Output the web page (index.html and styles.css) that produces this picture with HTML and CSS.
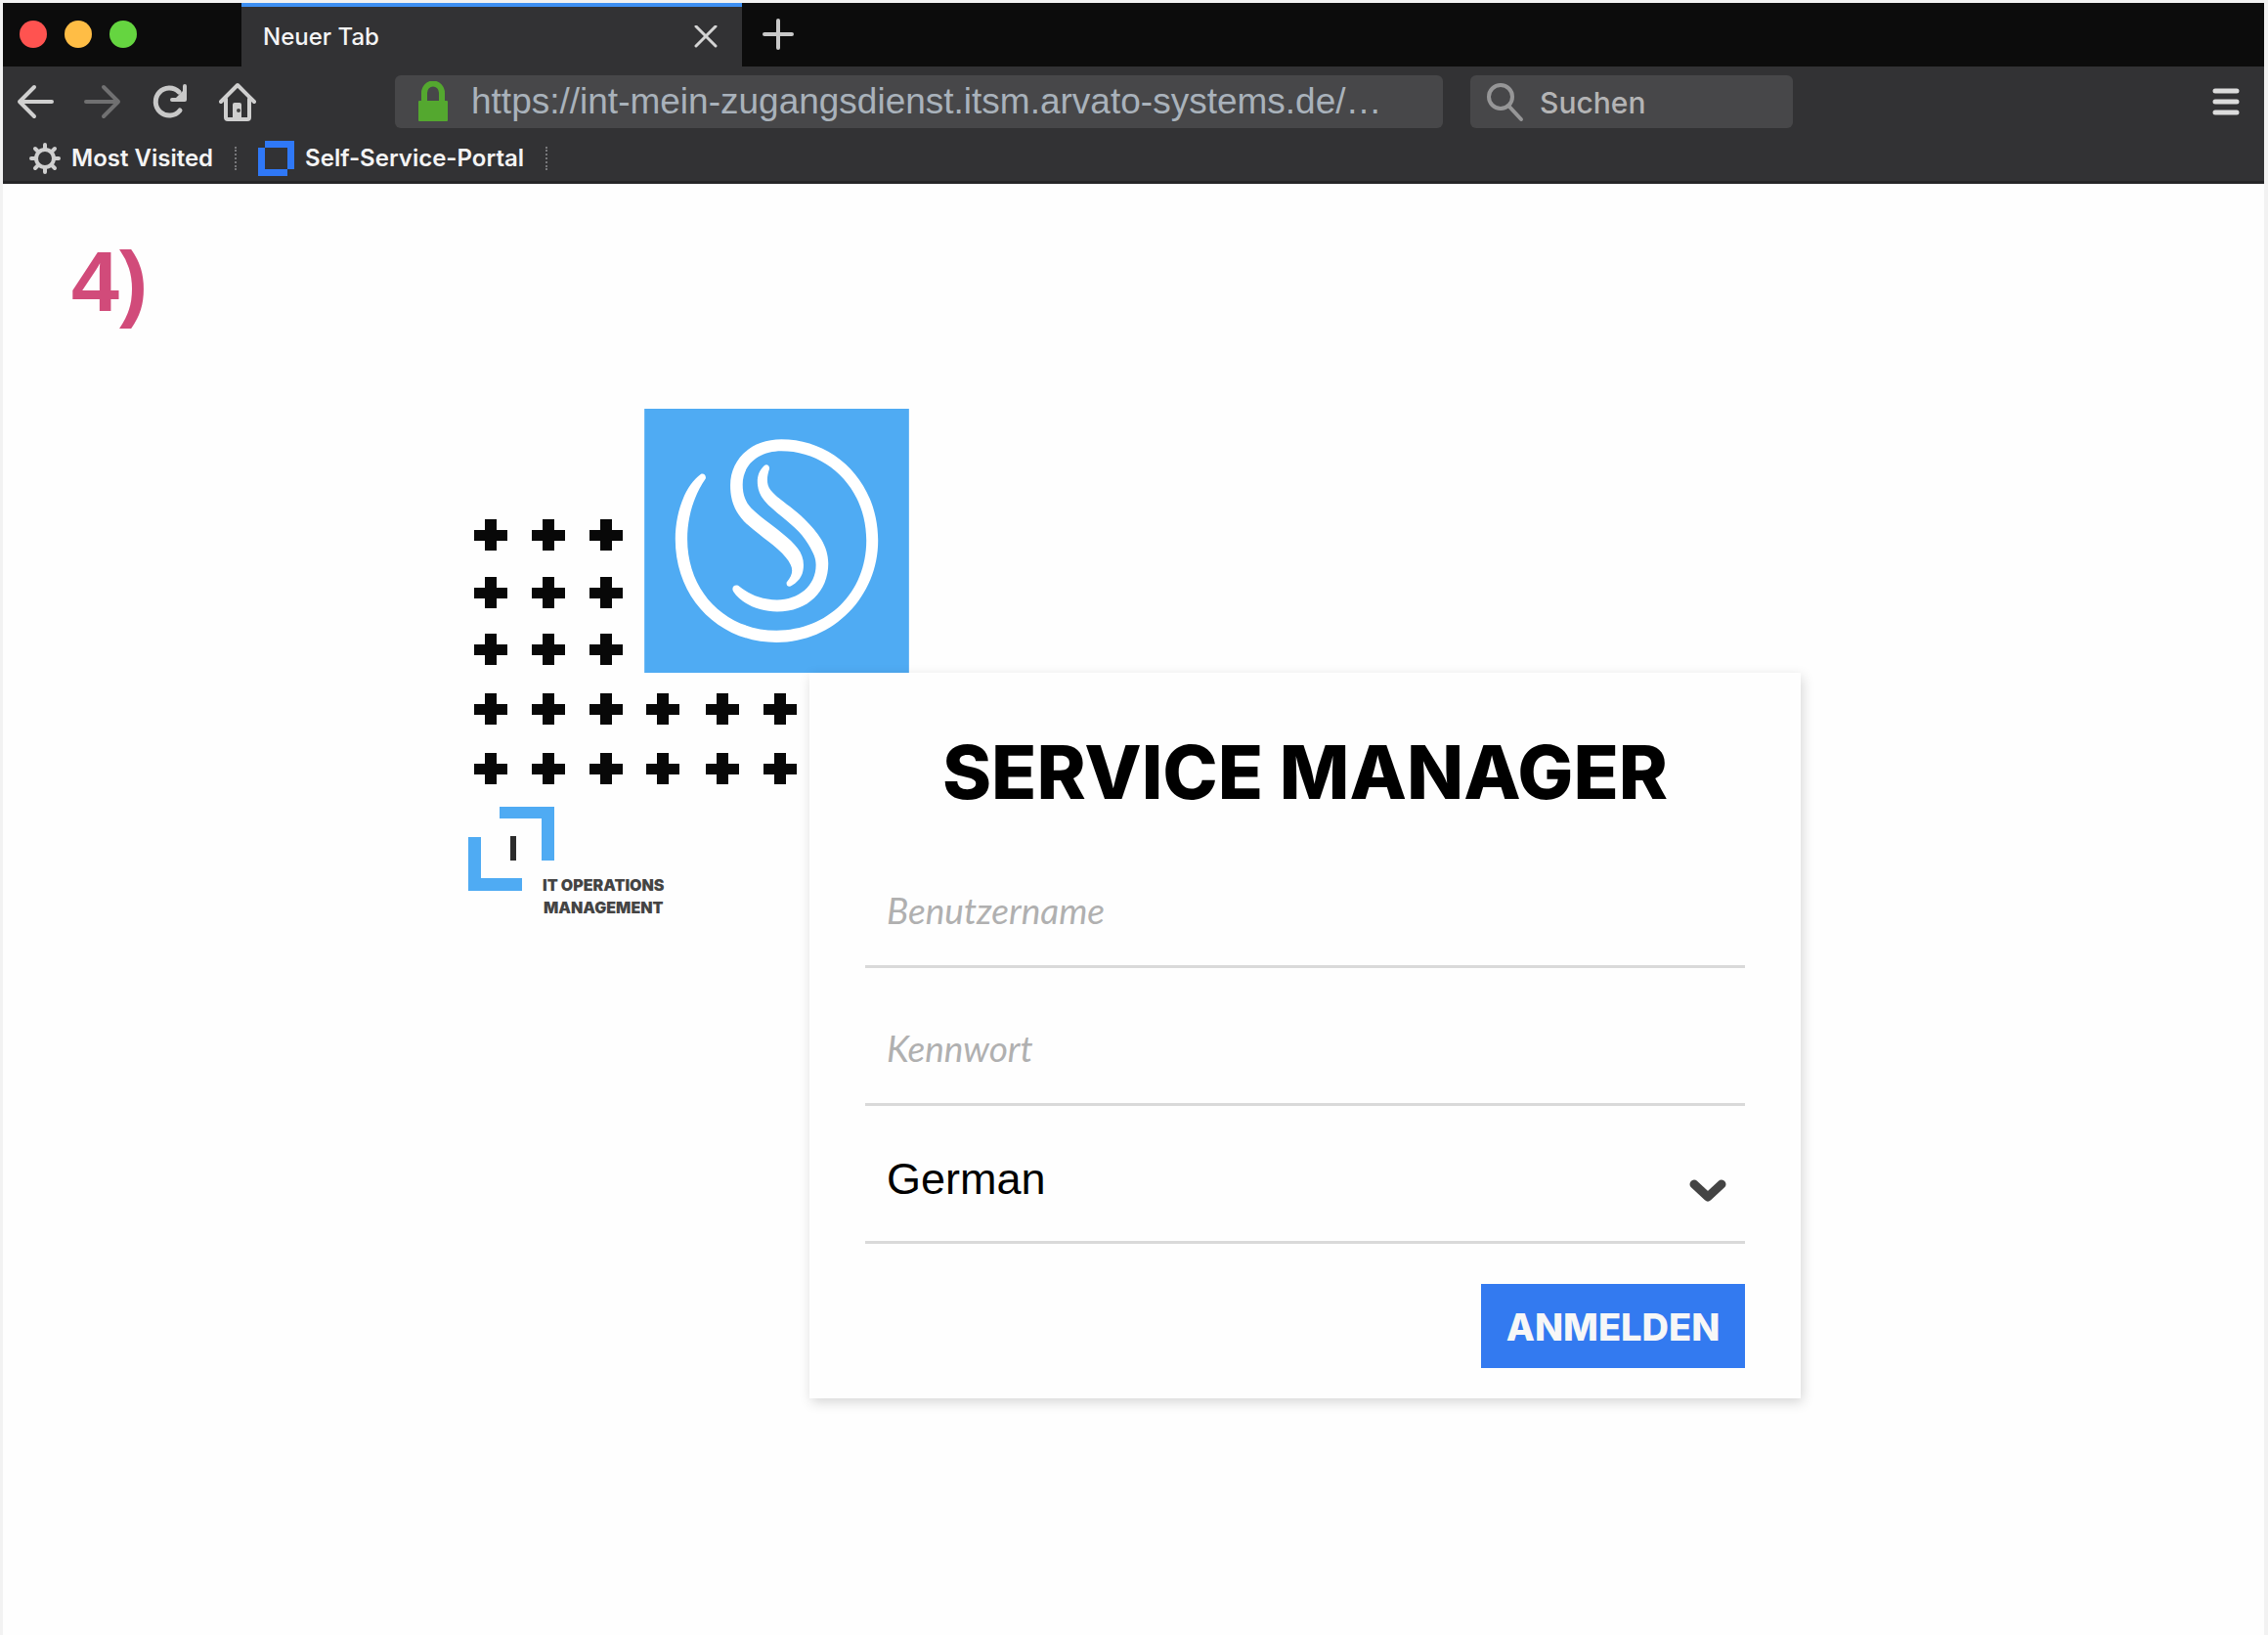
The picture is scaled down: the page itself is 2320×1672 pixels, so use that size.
FILE: index.html
```html
<!DOCTYPE html>
<html lang="de">
<head>
  <meta charset="utf-8">
  <meta name="viewport" content="width=device-width, initial-scale=1">
  <title>Service Manager</title>
  <link rel="stylesheet" href="styles.css">
</head>
<body>
<div class="window">
  <header class="chrome">
    <div class="tabstrip">
      <div class="lights">
        <span class="light light-red"></span>
        <span class="light light-yellow"></span>
        <span class="light light-green"></span>
      </div>
      <div class="tab">
        <span class="tab-title">Neuer Tab</span>
        <button class="icon-button" type="button" aria-label="Tab schließen">
          <svg width="24" height="24" viewBox="0 0 24 24"><path d="M2 1 22 21M22 1 2 21" fill="none" stroke="#d4d4d4" stroke-width="3" stroke-linecap="round"/></svg>
        </button>
      </div>
      <button class="icon-button new-tab" type="button" aria-label="Neuer Tab">
        <svg width="34" height="34" viewBox="0 0 34 34"><path d="M17 3V31M3 17H31" fill="none" stroke="#c8c8c8" stroke-width="4" stroke-linecap="round"/></svg>
      </button>
    </div>

    <div class="toolbar">
      <nav class="nav-buttons" aria-label="Navigation">
        <button class="icon-button" type="button" aria-label="Zurück">
          <svg width="38" height="38" viewBox="0 0 38 38"><path d="M18 4 3 19 18 34M3 19H36" fill="none" stroke="#d0d0d0" stroke-width="4" stroke-linecap="round" stroke-linejoin="round"/></svg>
        </button>
        <button class="icon-button" type="button" aria-label="Vor" disabled>
          <svg width="38" height="38" viewBox="0 0 38 38"><path d="M20 4 35 19 20 34M35 19H2" fill="none" stroke="#707071" stroke-width="4" stroke-linecap="round" stroke-linejoin="round"/></svg>
        </button>
        <button class="icon-button" type="button" aria-label="Neu laden">
          <svg width="38" height="38" viewBox="0 0 38 38"><path d="M29 28A14 14 0 1 1 28 9" fill="none" stroke="#c8c8c8" stroke-width="5" stroke-linecap="round"/><path d="M34 3V17H21" fill="none" stroke="#c8c8c8" stroke-width="4" stroke-linecap="round" stroke-linejoin="round"/><path d="M34 6V17H23Z" fill="#c8c8c8"/></svg>
        </button>
        <button class="icon-button" type="button" aria-label="Startseite">
          <svg width="38" height="40" viewBox="0 0 38 40"><path d="M2 20 19 3 36 20M7 17V36Q7 38 9 38H29Q31 38 31 36V17" fill="none" stroke="#cfcfcf" stroke-width="4" stroke-linecap="round" stroke-linejoin="round"/><path d="M14 38V23Q14 21 16 21H21Q23 21 23 23V38Z" fill="#cfcfcf"/><circle cx="20" cy="29" r="2" fill="#444"/></svg>
        </button>
      </nav>
      <label class="box address">
        <svg width="30" height="42" viewBox="0 0 30 42"><path d="M6 22V12A9 9.500 0 0 1 24 12V22" fill="none" stroke="#54a82f" stroke-width="6"/><rect y="20" width="30" height="21" rx="1" fill="#54a82f"/></svg>
        <input class="address-input" type="text" aria-label="Adresse" value="https://int-mein-zugangsdienst.itsm.arvato-systems.de/…">
      </label>
      <label class="box search">
        <svg class="search-icon" width="38" height="42" viewBox="0 0 38 42"><circle cx="14" cy="16" r="12" fill="none" stroke="#969697" stroke-width="4"/><path d="M22 25 35 39" stroke="#969697" stroke-width="4" stroke-linecap="round"/></svg>
        <input class="search-input" type="text" aria-label="Suchen" placeholder="Suchen">
      </label>
      <button class="icon-button menu" type="button" aria-label="Menü">
        <svg width="28" height="30" viewBox="0 0 28 30"><path d="M3 4H25M3 15H25M3 26H25" stroke="#dcdcdc" stroke-width="5" stroke-linecap="round"/></svg>
      </button>
    </div>

    <nav class="bookmarks" aria-label="Lesezeichen">
      <a class="bookmark" href="#">
        <svg width="32" height="32" viewBox="0 0 32 32"><circle cx="16" cy="16" r="9" fill="none" stroke="#cfcfcf" stroke-width="4"/><path d="M16 6V2M16 26V30M6 16H2M26 16H30M9 9 6 6M23 9 26 6M9 23 6 26M23 23 26 26" stroke="#cfcfcf" stroke-width="4" stroke-linecap="round"/></svg>
        Most Visited
      </a>
      <span class="divider"></span>
      <a class="bookmark" href="#">
        <svg width="37" height="36" viewBox="0 0 37 36"><path d="M7 0H37V29H30V36H0V7H7ZM7 7V29H30V7Z" fill="#2f78f7" fill-rule="evenodd"/></svg>
        Self-Service-Portal
      </a>
      <span class="divider"></span>
    </nav>
  </header>

  <main class="content">
    <p class="step">4)</p>

    <section class="login">
      <svg class="dots-top" width="180" height="270" viewBox="0 0 180 270" aria-hidden="true">
        <defs><path id="plus" d="M-6-16H6V-5H17V6H6V16H-6V6H-17V-5H-6Z" fill="#080808"/></defs>
        <use href="#plus" x="23" y="129"/><use href="#plus" x="82" y="129"/><use href="#plus" x="141" y="129"/>
        <use href="#plus" x="23" y="188"/><use href="#plus" x="82" y="188"/><use href="#plus" x="141" y="188"/>
        <use href="#plus" x="23" y="246"/><use href="#plus" x="82" y="246"/><use href="#plus" x="141" y="246"/>
      </svg>

      <svg class="logo" width="271" height="270" viewBox="597 55 813 811" role="img" aria-label="Service Manager">
        <rect x="597" y="55" width="813" height="811" fill="#4fabf3"/>
        <path fill="#fff" d="M770 256C722 290 692 375 692 455C692 640 830 773 1003 773C1180 773 1315 630 1315 460C1315 280 1180 149 1018 149C925 149 861 210 861 290C861 345 880 380 915 412C960 452 1000 475 1032 512C1055 540 1058 560 1034 588C1032 600 1042 604 1050 598C1078 582 1086 560 1086 535C1086 495 1060 470 1020 437C980 405 950 385 925 360C905 338 899 315 899 288C899 225 950 185 1018 185C1160 185 1279 300 1279 460C1279 620 1160 736 1003 736C850 736 729 620 729 455C729 385 750 320 785 270C788 258 778 252 770 256Z"/>
        <path fill="#fff" d="M965 230C945 250 943 270 945 290C950 330 975 348 1005 375C1050 412 1075 430 1100 470C1118 500 1124 515 1124 535C1124 600 1070 642 1005 642C950 642 915 622 885 598C872 594 864 604 870 616C895 655 950 678 1005 678C1100 678 1162 615 1162 530C1162 475 1130 435 1090 395C1050 355 1010 335 985 305C970 285 974 262 981 240C982 228 972 224 965 230Z"/>
      </svg>

      <div class="brand">
        <svg width="349" height="136" viewBox="0 0 349 136" aria-hidden="true">
          <use href="#plus" x="23" y="37"/><use href="#plus" x="82" y="37"/><use href="#plus" x="141" y="37"/><use href="#plus" x="199" y="37"/><use href="#plus" x="260" y="37"/><use href="#plus" x="319" y="37"/>
          <use href="#plus" x="23" y="98"/><use href="#plus" x="82" y="98"/><use href="#plus" x="141" y="98"/><use href="#plus" x="199" y="98"/><use href="#plus" x="260" y="98"/><use href="#plus" x="319" y="98"/>
        </svg>
        <div class="brand-mark">
          <svg width="88" height="88" viewBox="0 0 88 88" aria-hidden="true"><path d="M32 1H88V56H75V13H32ZM0 32H13V74H55V87H0Z" fill="#4fabf3"/><rect x="43" y="31" width="6" height="25" fill="#2c2c2c"/></svg>
          <p class="brand-name">IT OPERATIONS<br>MANAGEMENT</p>
        </div>
      </div>

      <form class="card">
        <h1 class="title">SERVICE MANAGER</h1>
        <div class="field">
          <input class="field-input" type="text" placeholder="Benutzername" aria-label="Benutzername">
        </div>
        <div class="field">
          <input class="field-input" type="password" placeholder="Kennwort" aria-label="Kennwort">
        </div>
        <div class="field">
          <select class="field-select" aria-label="Sprache">
            <option>German</option>
          </select>
          <svg class="chevron" width="38" height="24" viewBox="0 0 38 24" aria-hidden="true"><path d="M5 5 19 18 33 5" fill="none" stroke="#444" stroke-width="9" stroke-linecap="round" stroke-linejoin="round"/></svg>
        </div>
        <button class="submit" type="button">ANMELDEN</button>
      </form>
    </section>
  </main>
</div>
</body>
</html>
```
FILE: styles.css
```css
* {
  box-sizing: border-box;
}

body {
  margin: 0;
  background: #f2f2f2;
  font-family: Inter, "Liberation Sans", sans-serif;
}

.window {
  display: flex;
  flex-direction: column;
  min-height: 100vh;
  border: solid #f2f2f2;
  border-width: 3px 4px 0 3px;
  background: #fefefe;
}

/* Browser chrome */

.chrome {
  border-bottom: 3px solid #252527;
  background: #323234;
  color: #f4f4f4;
}

.icon-button {
  display: flex;
  padding: 0;
  border: 0;
  background: none;
}

.tabstrip {
  display: flex;
  align-items: center;
  height: 65px;
  background: #0c0c0c;
}

.lights {
  display: flex;
  gap: 18px;
  width: 244px;
  padding: 0 0 2px 17px;
}

.light {
  width: 28px;
  height: 28px;
  border-radius: 50%;
}

.light-red {
  background: #ff5350;
}

.light-yellow {
  background: #ffbd45;
}

.light-green {
  background: #65d540;
}

.tab {
  display: flex;
  align-items: center;
  justify-content: space-between;
  width: 512px;
  height: 65px;
  padding: 0 25px 0 22px;
  border-top: 4px solid #3d8ff2;
  background: #323234;
}

.tab-title {
  font-size: 24px;
  font-weight: 500;
}

.new-tab {
  margin-left: 20px;
  padding-bottom: 2px;
}

.toolbar {
  display: flex;
  align-items: center;
  height: 72px;
  padding: 0 25px 0 14px;
}

.nav-buttons {
  display: flex;
  align-items: center;
  gap: 31px;
  width: 387px;
}

.box {
  display: flex;
  align-items: center;
  min-width: 0;
  height: 54px;
  border-radius: 6px;
  background: #474749;
}

.address {
  flex: 0 1 1072px;
  gap: 24px;
  padding: 0 24px;
}

.address-input,
.search-input {
  flex: 1;
  width: 0;
  min-width: 0;
  padding: 0;
  border: 0;
  outline: 0;
  background: none;
  font-family: inherit;
}

.address-input {
  color: #a9b2bb;
  font-family: "Liberation Sans", Arial, sans-serif;
  font-size: 37px;
}

.search {
  flex: 0 1 330px;
  gap: 16px;
  margin-left: 28px;
  padding: 0 17px;
}

.search-icon {
  flex: none;
}

.search-input {
  padding-top: 2px;
  font-size: 30px;
  font-weight: 500;
}

.search-input::placeholder {
  color: #b4b4b5;
  opacity: 1;
}

.menu {
  margin-left: auto;
}

.bookmarks {
  display: flex;
  align-items: center;
  gap: 22px;
  height: 45px;
  padding: 0 0 2px 27px;
}

.bookmark {
  display: flex;
  align-items: center;
  gap: 11px;
  color: inherit;
  font-size: 24px;
  font-weight: 600;
  text-decoration: none;
}

.divider {
  height: 24px;
  border-left: 2px dotted #77777a;
}

/* Login page */

.content {
  flex: 1;
  padding: 56px 40px 40px 42px;
}

.step {
  margin: 0 0 86px 28px;
  color: #d14b7a;
  font-family: "Liberation Sans", Arial, sans-serif;
  font-size: 88px;
  font-weight: 700;
  line-height: 88px;
}

.login {
  display: grid;
  grid-template-columns: 180px 169px 1fr;
  max-width: 1363px;
  margin: 0 auto;
}

.dots-top {
  grid-area: 1 / 1;
}

.logo {
  grid-area: 1 / 2 / 2 / 4;
}

.brand {
  grid-area: 2 / 1 / 3 / 3;
}

.brand svg {
  display: block;
}

.brand-mark {
  display: flex;
  align-items: flex-start;
}

.brand-name {
  margin: 70px 0 0 -12px;
  color: #444;
  font-size: 16px;
  font-weight: 900;
  line-height: 23px;
  text-align: center;
}

.card {
  grid-area: 2 / 3;
  display: flex;
  flex-direction: column;
  padding: 61px 57px 31px;
  background: #fefefe;
  box-shadow: 2px 4px 12px rgba(0, 0, 0, 0.16);
}

.title {
  margin: 0 0 20px;
  color: #000;
  font-size: 76px;
  font-weight: 800;
  line-height: 80px;
  text-align: center;
}

.field {
  position: relative;
  height: 141px;
  border-bottom: 3px solid #d9d9d9;
}

.field-input,
.field-select {
  width: 100%;
  height: 100%;
  border: 0;
  outline: 0;
  background: none;
}

.field-input {
  padding: 25px 22px 0;
  font-family: Lato, "Liberation Sans", sans-serif;
  font-size: 37px;
}

.field-input::placeholder {
  color: #b0b0b0;
  font-style: italic;
  opacity: 1;
}

.field-select {
  padding: 10px 22px 0;
  appearance: none;
  color: #000;
  font-family: "Liberation Sans", Arial, sans-serif;
  font-size: 45px;
}

.chevron {
  position: absolute;
  top: 75px;
  right: 19px;
  pointer-events: none;
}

.submit {
  align-self: flex-end;
  width: 270px;
  height: 86px;
  margin-top: 41px;
  padding: 2px 0 0;
  border: 0;
  background: #337af0;
  color: #f7f7f7;
  font-family: inherit;
  font-size: 38px;
  font-weight: 800;
}
```
